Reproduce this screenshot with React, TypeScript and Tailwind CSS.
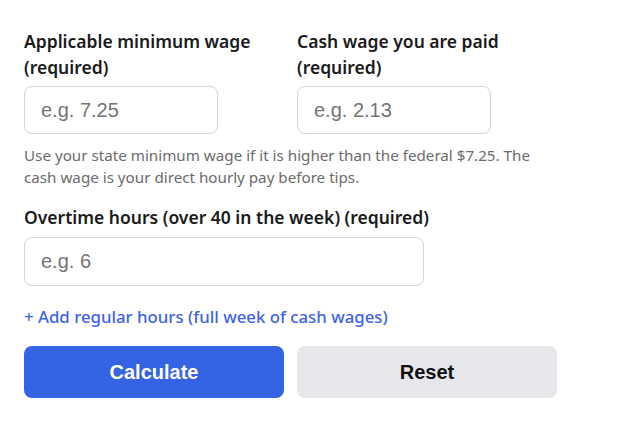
import React from 'react';

const labelCls = "block text-[17.5px] leading-[26px] font-semibold text-[#1a1a1a] mb-[6px]";
const inputCls =
  "rounded-lg border border-[#d1d5db] bg-white px-4 text-[20px] text-[#111] placeholder:text-[#757575] outline-none font-['Liberation_Sans',Arial,sans-serif]";

export default function App() {
  return (
    <div className="bg-white min-h-screen px-6 pt-[28px] font-['Noto_Sans',sans-serif]">
      <div className="w-[533px]">
        <div className="grid grid-cols-2 gap-x-[13px]">
          <div>
            <label className={labelCls}>Applicable minimum wage (required)</label>
            <input className={inputCls + " h-[48px] w-[194px]"} placeholder="e.g. 7.25" />
          </div>
          <div>
            <label className={labelCls}>Cash wage you are paid (required)</label>
            <input className={inputCls + " h-[48px] w-[194px]"} placeholder="e.g. 2.13" />
          </div>
        </div>
        <p className="mt-[10px] text-[15.2px] leading-[22px] text-[#6b6b6b]">
          Use your state minimum wage if it is higher than the federal $7.25. The cash wage is your direct hourly pay before tips.
        </p>

        <div className="mt-[16px]">
          <label className="block text-[17.5px] leading-[26px] font-semibold text-[#1a1a1a] mb-[7px]">
            Overtime hours (over 40 in the week) (required)
          </label>
          <input className={inputCls + " h-[49px] w-[400px]"} placeholder="e.g. 6" />
        </div>

        <button className="mt-[19px] block text-[16.8px] leading-[24px] font-medium text-[#3f63e6]">
          + Add regular hours (full week of cash wages)
        </button>

        <div className="mt-[17px] grid grid-cols-2 gap-x-[13px]">
          <button className="h-[52px] rounded-lg bg-[#3463e4] text-white text-[20px] font-bold font-['Liberation_Sans',Arial,sans-serif]">
            Calculate
          </button>
          <button className="h-[52px] rounded-lg bg-[#e5e7eb] text-[#111] text-[20px] font-bold font-['Liberation_Sans',Arial,sans-serif]">
            Reset
          </button>
        </div>
      </div>
    </div>
  );
}
